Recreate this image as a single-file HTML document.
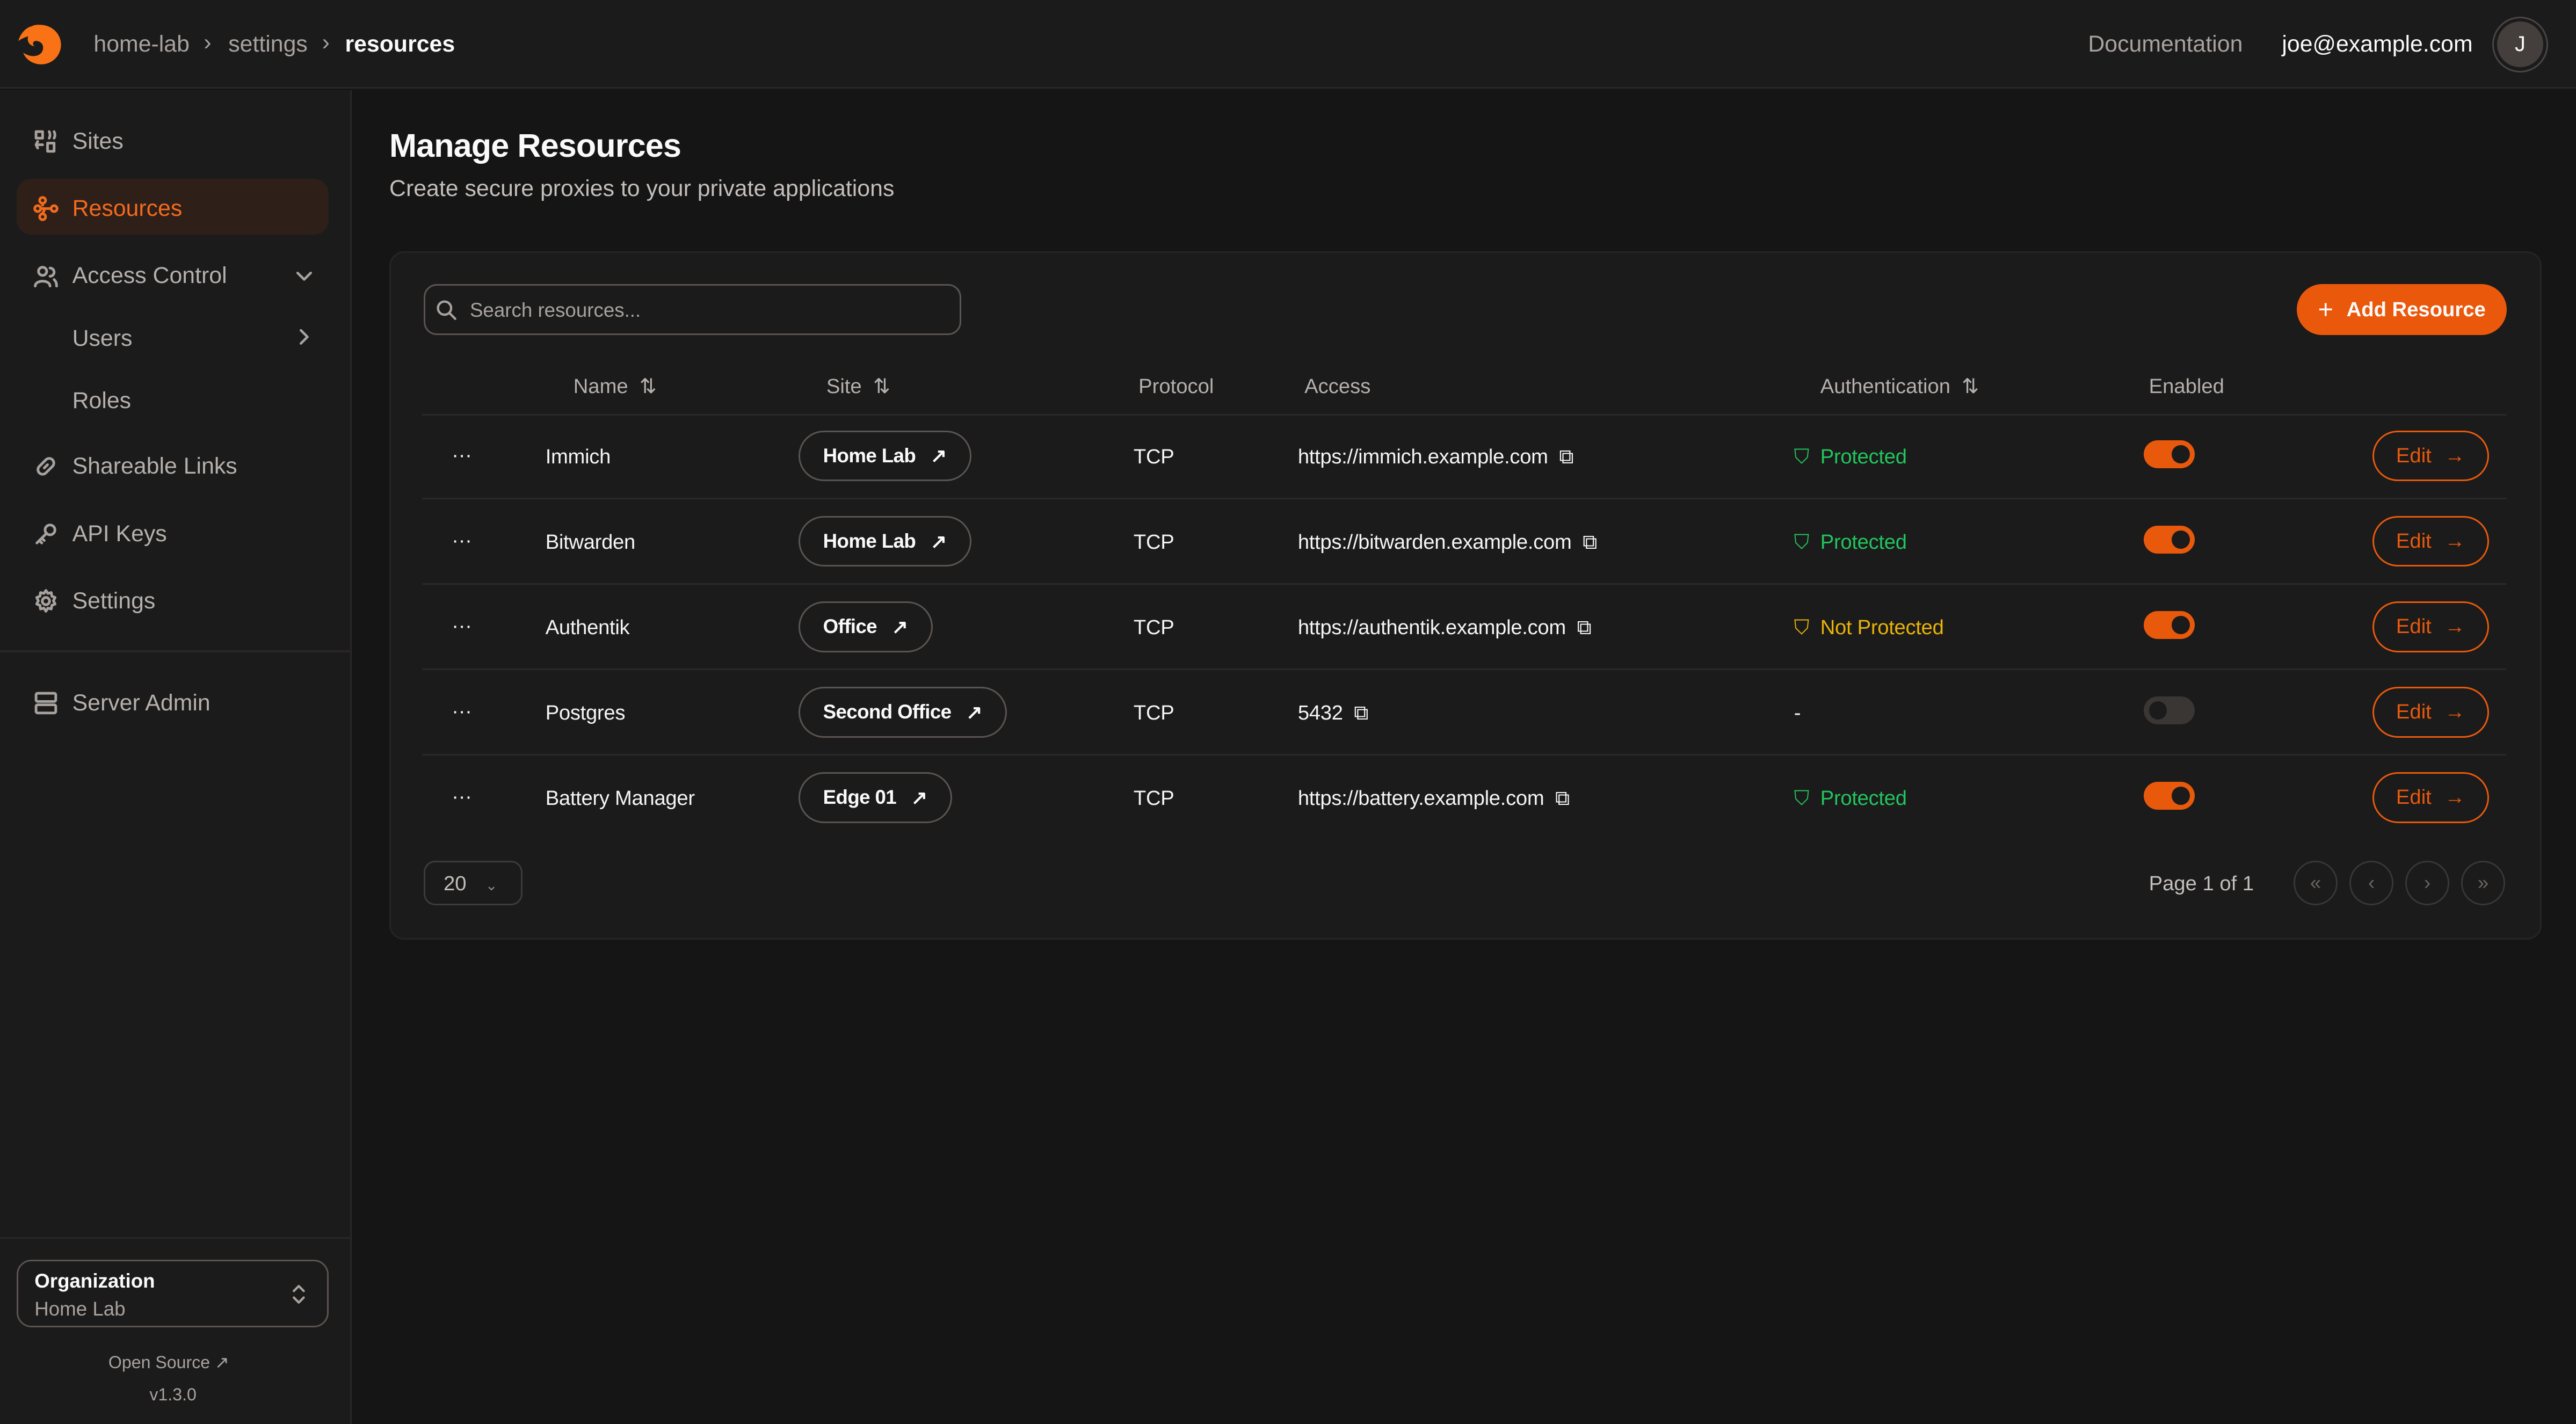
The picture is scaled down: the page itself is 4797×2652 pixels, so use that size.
<!DOCTYPE html>
<html><head><meta charset="utf-8"><style>
*{box-sizing:border-box;margin:0;padding:0}
html,body{width:4797px;height:2652px;overflow:hidden;background:#151515}
#r{zoom:3.0593;width:1568px;height:867px;position:relative;font-family:"Liberation Sans",sans-serif;color:#fafafa;background:#151515}
.a{position:absolute}
.g{color:#a8a29e}
.hdr{left:0;top:0;width:1568px;height:54px;background:#1b1b1b;border-bottom:1px solid #2a2626}
.side{left:0;top:55px;width:214px;height:812px;background:#1b1b1b;border-right:1px solid #2a2626}
.nav{left:20px;font-size:14px;color:#b5b0ac;display:flex;align-items:center;gap:8px}
.nav svg{width:16px;height:16px;stroke:#a8a29e;fill:none;stroke-width:1.6;stroke-linecap:round;stroke-linejoin:round}
.card{left:237px;top:153px;width:1310px;height:419px;background:#1b1b1b;border:1px solid #262424;border-radius:9px}
.th{font-size:12.5px;color:#b5b0ac;top:228px}
.line{left:257px;width:1269px;height:1px;background:#2c2828}
.td{font-size:12.5px;color:#f5f5f5;letter-spacing:-0.1px}
.pill{border:1px solid #5a5450;border-radius:16px;height:31px;font-size:12px;font-weight:bold;letter-spacing:-0.2px;display:flex;align-items:center;padding:0 14px;gap:9px}
.tog{width:31px;height:17px;border-radius:9px;background:#e8590c}
.tog::after{content:"";position:absolute;right:3px;top:3px;width:11px;height:11px;border-radius:50%;background:#1b1b1b}
.edit{width:71px;height:31px;border:1px solid #e8590c;border-radius:16px;color:#e8590c;font-size:12.5px;display:flex;align-items:center;justify-content:center;gap:8px;left:1444px}
.pg{width:27px;height:27px;border:1px solid #3a3634;border-radius:50%;top:524px;color:#6b6560;font-size:12px;display:flex;align-items:center;justify-content:center}
svg.i{fill:none;stroke-linecap:round;stroke-linejoin:round}
</style></head><body><div id="r">
<div class="a hdr"></div>
<svg class="a" style="left:10px;top:13px" width="29" height="28" viewBox="0 0 29 28"><path d="M14 2 C22 2 27 8 27 14 C27 22 20 27 13 26 C8 25 5 22 4 19 C7 21 11 22 14 20 C17 18 17 13 13 12 C10 11 9 14 11 15 C8 15 6 12 7 9 C4 10 2 11 1 12 C2 8 5 4 9 3 C11 2 12 2 14 2Z" fill="#f97316"/></svg>
<div class="a g" style="left:57px;top:19px;font-size:14px">home-lab</div>
<div class="a g" style="left:124px;top:18px;font-size:14px">›</div>
<div class="a g" style="left:139px;top:19px;font-size:14px">settings</div>
<div class="a g" style="left:196px;top:18px;font-size:14px">›</div>
<div class="a" style="left:210px;top:19px;font-size:14px;font-weight:bold">resources</div>
<div class="a g" style="left:1271px;top:19px;font-size:14px">Documentation</div>
<div class="a" style="left:1389px;top:19px;font-size:14px">joe@example.com</div>
<div class="a" style="left:1517px;top:10px;width:34px;height:34px;border-radius:50%;border:1px solid #4a4543;padding:2px"><div style="width:28px;height:28px;border-radius:50%;background:#443e3c;font-size:13px;text-align:center;line-height:28px">J</div></div>

<div class="a side"></div>
<div class="a nav" style="top:78px"><svg viewBox="0 0 16 16"><rect x="2" y="2" width="4" height="4"/><rect x="9" y="9" width="4" height="5"/><path d="M10 2 Q11 4 10 6 M13 2 Q14 4 13 6 M2 10 H6 M3 12 L2 10 L3 8"/></svg><span>Sites</span></div>
<div class="a" style="left:10px;top:109px;width:190px;height:34px;background:#2e1f19;border-radius:9px"></div>
<div class="a nav" style="top:119px;color:#f26b1d"><svg viewBox="0 0 16 16" style="stroke:#f26b1d"><circle cx="6" cy="3" r="1.8"/><circle cx="3" cy="8" r="1.8"/><circle cx="13" cy="8" r="1.8"/><circle cx="6" cy="13" r="1.8"/><path d="M5 8 H11 M6 5 L6 6 M6 11 L7 9"/></svg><span>Resources</span></div>
<div class="a nav" style="top:160px"><svg viewBox="0 0 16 16"><circle cx="6" cy="5" r="2.5"/><path d="M1.5 14 C1.5 10 10.5 10 10.5 14 M10.5 3 A2.5 2.5 0 0 1 10.5 8 M13 10 C14 11 14.5 12 14.5 14"/></svg><span>Access Control</span></div>
<svg class="a i" style="left:178px;top:161px" width="14" height="14" viewBox="0 0 14 14" stroke="#a8a29e" stroke-width="1.5"><path d="M3 5 L7 9 L11 5"/></svg>
<div class="a" style="left:44px;top:198px;font-size:14px;color:#b5b0ac">Users</div>
<svg class="a i" style="left:178px;top:198px" width="14" height="14" viewBox="0 0 14 14" stroke="#a8a29e" stroke-width="1.5"><path d="M5 3 L9 7 L5 11"/></svg>
<div class="a" style="left:44px;top:236px;font-size:14px;color:#b5b0ac">Roles</div>
<div class="a nav" style="top:276px"><svg viewBox="0 0 16 16"><path d="M7 9 L9 7 M6 6 L4 8 A2.5 2.5 0 0 0 8 12 L10 10 M10 10 L12 8 A2.5 2.5 0 0 0 8 4 L6 6"/></svg><span>Shareable Links</span></div>
<div class="a nav" style="top:317px"><svg viewBox="0 0 16 16"><circle cx="10.5" cy="5.5" r="3"/><path d="M8.5 7.5 L2.5 13.5 M4 12 L5.5 13.5 M5.5 10.5 L7 12"/></svg><span>API Keys</span></div>
<div class="a nav" style="top:358px"><svg viewBox="0 0 16 16"><circle cx="8" cy="8" r="2.2"/><path d="M8 1.5 L9.2 3.3 L11.3 2.8 L11.6 5 L13.6 5.8 L12.6 7.8 L13.6 9.8 L11.6 10.6 L11.3 12.8 L9.2 12.3 L8 14.2 L6.8 12.3 L4.7 12.8 L4.4 10.6 L2.4 9.8 L3.4 7.8 L2.4 5.8 L4.4 5 L4.7 2.8 L6.8 3.3Z"/></svg><span>Settings</span></div>
<div class="a" style="left:0;top:396px;width:214px;height:1px;background:#2a2626"></div>
<div class="a nav" style="top:420px"><svg viewBox="0 0 16 16"><rect x="2" y="2" width="12" height="5" rx="1"/><rect x="2" y="9" width="12" height="5" rx="1"/></svg><span>Server Admin</span></div>
<div class="a" style="left:0;top:753px;width:214px;height:1px;background:#2a2626"></div>
<div class="a" style="left:10px;top:767px;width:190px;height:41px;border:1px solid #5a5450;border-radius:9px"></div>
<div class="a" style="left:21px;top:773px;font-size:12px;font-weight:bold">Organization</div>
<div class="a g" style="left:21px;top:790px;font-size:12px">Home Lab</div>
<svg class="a i" style="left:176px;top:781px" width="12" height="14" viewBox="0 0 12 14" stroke="#a8a29e" stroke-width="1.4"><path d="M3 5 L6 2 L9 5 M3 9 L6 12 L9 9"/></svg>
<div class="a g" style="left:66px;top:823px;font-size:10.5px">Open Source ↗</div>
<div class="a g" style="left:91px;top:843px;font-size:10.5px">v1.3.0</div>

<div class="a" style="left:237px;top:77px;font-size:20px;font-weight:bold;letter-spacing:-0.3px">Manage Resources</div>
<div class="a" style="left:237px;top:107px;font-size:14px;color:#c4bfbb">Create secure proxies to your private applications</div>

<div class="a card"></div>
<div class="a" style="left:258px;top:173px;width:327px;height:31px;border:1px solid #5a5450;border-radius:8px"></div>
<svg class="a i" style="left:265px;top:182px" width="13" height="13" viewBox="0 0 13 13" stroke="#a8a29e" stroke-width="1.4"><circle cx="5.5" cy="5.5" r="4"/><path d="M8.5 8.5 L12 12"/></svg>
<div class="a g" style="left:286px;top:182px;font-size:12px">Search resources...</div>
<div class="a" style="left:1398px;top:173px;width:128px;height:31px;background:#ea580c;border-radius:16px;font-size:12.5px;font-weight:bold;display:flex;align-items:center;justify-content:center;gap:8px"><span style="font-size:16px;font-weight:normal">+</span>Add Resource</div>

<div class="a th" style="left:349px">Name &nbsp;⇅</div>
<div class="a th" style="left:503px">Site &nbsp;⇅</div>
<div class="a th" style="left:693px">Protocol</div>
<div class="a th" style="left:794px">Access</div>
<div class="a th" style="left:1108px">Authentication &nbsp;⇅</div>
<div class="a th" style="left:1308px">Enabled</div>
<div class="a line" style="top:252px"></div>
<div class="a line" style="top:303px"></div>
<div class="a line" style="top:355px"></div>
<div class="a line" style="top:407px"></div>
<div class="a line" style="top:459px"></div>

<div class="a td" style="left:275px;top:270px">···</div>
<div class="a td" style="left:332px;top:271px">Immich</div>
<div class="a pill" style="left:486px;top:262px">Home Lab <span>↗</span></div>
<div class="a td" style="left:690px;top:271px">TCP</div>
<div class="a td" style="left:790px;top:271px">https://immich.example.com &nbsp;⧉</div>
<div class="a td" style="left:1092px;top:271px;color:#22c55e">⛉ &nbsp;Protected</div>
<div class="a tog" style="left:1305px;top:268px"></div>
<div class="a edit" style="top:262px">Edit <span>→</span></div>

<div class="a td" style="left:275px;top:322px">···</div>
<div class="a td" style="left:332px;top:323px">Bitwarden</div>
<div class="a pill" style="left:486px;top:314px">Home Lab <span>↗</span></div>
<div class="a td" style="left:690px;top:323px">TCP</div>
<div class="a td" style="left:790px;top:323px">https://bitwarden.example.com &nbsp;⧉</div>
<div class="a td" style="left:1092px;top:323px;color:#22c55e">⛉ &nbsp;Protected</div>
<div class="a tog" style="left:1305px;top:320px"></div>
<div class="a edit" style="top:314px">Edit <span>→</span></div>

<div class="a td" style="left:275px;top:374px">···</div>
<div class="a td" style="left:332px;top:375px">Authentik</div>
<div class="a pill" style="left:486px;top:366px">Office <span>↗</span></div>
<div class="a td" style="left:690px;top:375px">TCP</div>
<div class="a td" style="left:790px;top:375px">https://authentik.example.com &nbsp;⧉</div>
<div class="a td" style="left:1092px;top:375px;color:#eab308">⛉ &nbsp;Not Protected</div>
<div class="a tog" style="left:1305px;top:372px"></div>
<div class="a edit" style="top:366px">Edit <span>→</span></div>

<div class="a td" style="left:275px;top:426px">···</div>
<div class="a td" style="left:332px;top:427px">Postgres</div>
<div class="a pill" style="left:486px;top:418px">Second Office <span>↗</span></div>
<div class="a td" style="left:690px;top:427px">TCP</div>
<div class="a td" style="left:790px;top:427px">5432 &nbsp;⧉</div>
<div class="a td" style="left:1092px;top:427px">-</div>
<div class="a" style="left:1305px;top:424px;width:31px;height:17px;border-radius:9px;background:#3a3634"><div style="position:absolute;left:3px;top:3px;width:11px;height:11px;border-radius:50%;background:#1b1b1b"></div></div>
<div class="a edit" style="top:418px">Edit <span>→</span></div>

<div class="a td" style="left:275px;top:478px">···</div>
<div class="a td" style="left:332px;top:479px">Battery Manager</div>
<div class="a pill" style="left:486px;top:470px">Edge 01 <span>↗</span></div>
<div class="a td" style="left:690px;top:479px">TCP</div>
<div class="a td" style="left:790px;top:479px">https://battery.example.com &nbsp;⧉</div>
<div class="a td" style="left:1092px;top:479px;color:#22c55e">⛉ &nbsp;Protected</div>
<div class="a tog" style="left:1305px;top:476px"></div>
<div class="a edit" style="top:470px">Edit <span>→</span></div>

<div class="a" style="left:258px;top:524px;width:60px;height:27px;border:1px solid #3e3a38;border-radius:7px;font-size:12.5px;color:#c4bfbb;padding:6px 0 0 11px">20 <span style="font-size:9px;margin-left:8px;color:#8a847f">⌄</span></div>
<div class="a" style="left:1308px;top:531px;font-size:12.5px;color:#c4bfbb">Page 1 of 1</div>
<div class="a pg" style="left:1396px">«</div>
<div class="a pg" style="left:1430px">‹</div>
<div class="a pg" style="left:1464px">›</div>
<div class="a pg" style="left:1498px">»</div>
</div></body></html>
